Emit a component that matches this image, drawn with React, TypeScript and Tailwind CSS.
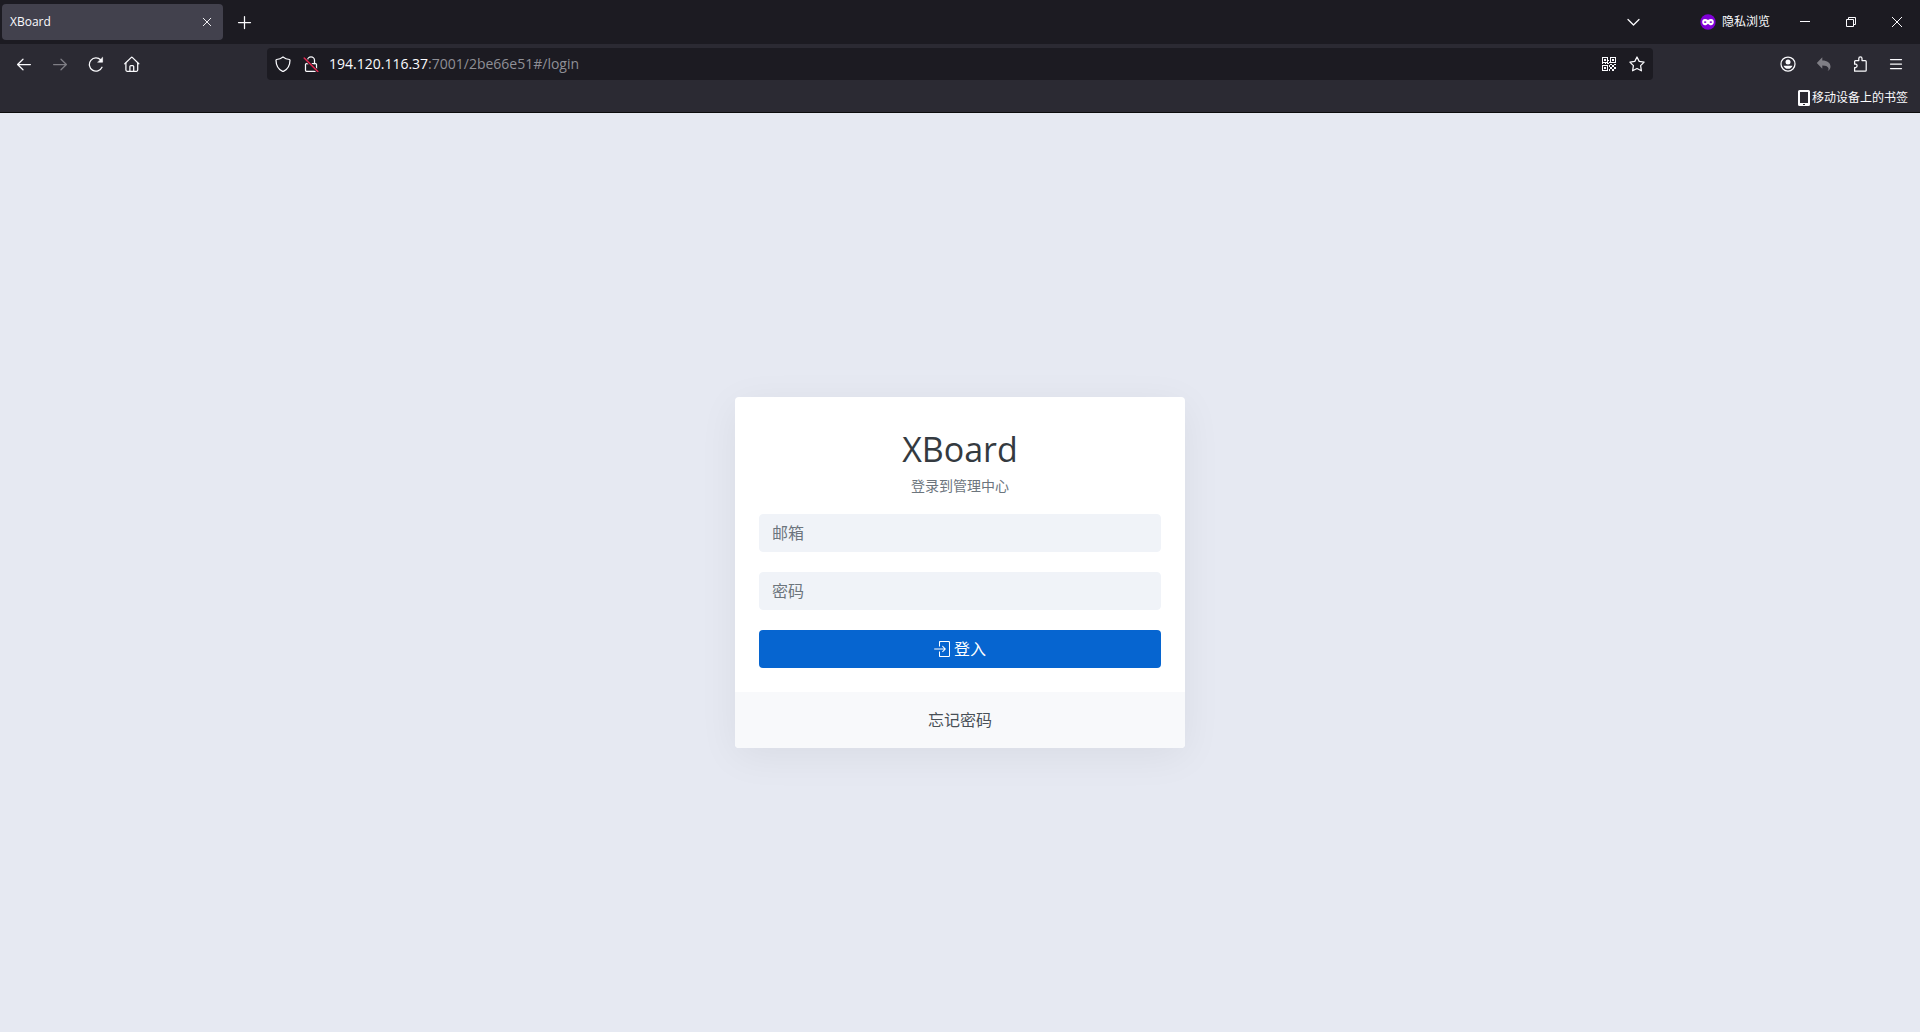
import { useState } from 'react';
import type { ReactNode } from 'react';
import { SlLogin } from 'react-icons/sl';

const Icon = ({ children, className = 'h-4 w-4' }: { children: ReactNode; className?: string }) => (
  <svg
    viewBox="0 0 16 16"
    className={className}
    fill="none"
    stroke="currentColor"
    strokeWidth="1.25"
    strokeLinecap="round"
    strokeLinejoin="round"
    aria-hidden="true"
  >
    {children}
  </svg>
);

const BackIcon = () => (
  <Icon>
    <path d="M14.4 8.5H1.8M7 3.2 1.6 8.5 7 13.8" />
  </Icon>
);

const ForwardIcon = () => (
  <Icon>
    <path d="M1.6 8.5h12.6M9 3.2l5.4 5.3L9 13.8" />
  </Icon>
);

const ReloadIcon = () => (
  <Icon>
    <path d="M14 11.2A6.6 6.6 0 1 1 12.8 4" />
    <path d="M14.6 1.6v4.6H10z" fill="currentColor" strokeWidth="0.6" />
  </Icon>
);

const HomeIcon = () => (
  <Icon>
    <path d="M.8 7.8 7.1 1.6a1 1 0 0 1 1.4 0l6.3 6.2" />
    <path d="M1.9 7v7.1c0 .7.5 1.2 1.2 1.2h9.4c.7 0 1.2-.5 1.2-1.2V7" />
    <path d="M5.9 15v-4.4c0-.6.4-1 1-1h1.8c.6 0 1 .4 1 1V15" />
  </Icon>
);

const ShieldIcon = () => (
  <Icon>
    <path d="M8 .9c1.9 1.5 4 2.3 6.4 2.6.4.1.6.3.6.7-.1 5.3-2.3 9.2-6.6 11.2a1 1 0 0 1-.8 0C3.3 13.4 1.1 9.5 1 4.2c0-.4.2-.6.6-.7C4 3.2 6.1 2.4 8 .9z" />
  </Icon>
);

const InsecureIcon = () => (
  <Icon>
    <path d="M4.5 7.5V4.3a3.5 3.5 0 0 1 7 0v3.2" />
    <rect x="2.5" y="7.5" width="11" height="7.8" rx="1" />
    <path d="M1.4 2.2 14.6 15.4" stroke="#1c1b22" strokeWidth="3" />
    <path d="M1.2 2 14.8 15.5" stroke="#e22850" strokeWidth="1.5" />
  </Icon>
);

const QrIcon = () => (
  <svg viewBox="0 0 14 14" className="h-3.5 w-3.5" fill="currentColor" shapeRendering="crispEdges" aria-hidden="true">
    <path
      fillRule="evenodd"
      d="M0 0h6v6H0zM1 1v4h4V1zM8 0h6v6H8zM9 1v4h4V1zM0 8h6v6H0zM1 9v4h4V9zM2 2h2v2H2zM10 2h2v2h-2zM2 10h2v2H2z"
    />
    <path d="M6 3h1v1H6zM7 5h1v1H7zM0 6h1v1H0zM3 6h1v1H3zM5 6h2v1H5zM8 7h2v1H8zM12 7h2v1h-2zM7 8h1v2H7zM10 8h2v2h-2zM8 10h2v2H8zM12 10h2v2h-2zM7 12h1v2H7zM10 12h2v2h-2z" />
  </svg>
);

const StarIcon = () => (
  <Icon>
    <path d="m8 1 2.2 4.4 4.9.7-3.5 3.5.8 5.2L8 12.5l-4.4 2.3.8-5.2L.9 6.1l4.9-.7z" />
  </Icon>
);

const AccountIcon = () => (
  <Icon>
    <circle cx="8" cy="8" r="7" />
    <circle cx="8" cy="6" r="2.5" fill="currentColor" stroke="none" />
    <path d="M3.5 9.7h9a4.8 4.8 0 0 1-9 0z" fill="currentColor" stroke="none" />
  </Icon>
);

const UndoIcon = () => (
  <Icon>
    <path
      d="M6.3 1.2v3.3c5 0 8.2 2.5 8.2 6 0 2.2-1.1 3.8-3 4.5 1-1 1.3-2 .9-3.1-.7-1.7-2.8-2.5-6.1-2.5v3.3L.8 6.9z"
      fill="currentColor"
      stroke="none"
    />
  </Icon>
);

const PuzzleIcon = () => (
  <Icon>
    <path d="M2.6 8.2V5.5c0-.5.4-.9.9-.9h3.3V2.5a1.6 1.6 0 0 1 3.2 0v2.1h3.3c.5 0 .9.4.9.9v8.8c0 .5-.4.9-.9.9H2.6v-3.7h1.2a1.7 1.7 0 0 0 0-3.3z" />
  </Icon>
);

const MenuIcon = () => (
  <Icon>
    <path d="M2.5 3.5h11M2.5 8h11M2.5 12.5h11" />
  </Icon>
);

const PhoneIcon = () => (
  <svg viewBox="0 0 12 16" className="h-4 w-3" fill="currentColor" aria-hidden="true">
    <path
      fillRule="evenodd"
      d="M1.5 0h9A1.5 1.5 0 0 1 12 1.5v13a1.5 1.5 0 0 1-1.5 1.5h-9A1.5 1.5 0 0 1 0 14.5v-13A1.5 1.5 0 0 1 1.5 0zM2 2v11h8V2zM5 14v1h2v-1z"
    />
  </svg>
);

const PrivateIcon = () => (
  <svg viewBox="0 0 16 16" className="h-4 w-4" aria-hidden="true">
    <circle cx="8" cy="8" r="7.7" fill="#8000d7" />
    <path
      fillRule="evenodd"
      fill="#fff"
      d="M5 5c1.2 0 2.2.4 3 1 .8-.6 1.8-1 3-1 1.8 0 2.8 1.2 2.8 3s-1.2 3.2-2.8 3.2c-1.3 0-2.2-.6-3-1.5-.8.9-1.7 1.5-3 1.5-1.6 0-2.8-1.4-2.8-3.2S3.2 5 5 5zM3.7 8.1c.9 1.3 2 1.3 2.9 0-.9-1.2-2-1.2-2.9 0zM9.4 8.1c.9 1.3 2 1.3 2.9 0-.9-1.2-2-1.2-2.9 0z"
    />
  </svg>
);

const ToolButton = ({ label, disabled, children }: { label: string; disabled?: boolean; children: ReactNode }) => (
  <button
    type="button"
    aria-label={label}
    disabled={disabled}
    className="flex h-8 w-9 items-center justify-center rounded hover:bg-white/10 disabled:text-[#7f7e85]"
  >
    {children}
  </button>
);

const WindowButton = ({ label, children }: { label: string; children: ReactNode }) => (
  <button type="button" aria-label={label} className="flex h-11 w-[46px] items-center justify-center hover:bg-white/10">
    <svg viewBox="0 0 10 10" className="h-2.5 w-2.5" fill="none" stroke="currentColor" aria-hidden="true">
      {children}
    </svg>
  </button>
);

const TabStrip = () => (
  <div className="flex h-11 items-center bg-[#1c1b22]">
    <div className="ml-0.5 flex h-9 w-[221px] items-center justify-between rounded bg-[#42414d] pr-1 pl-2">
      <span className="text-xs">XBoard</span>
      <button type="button" aria-label="关闭标签页" className="flex h-6 w-6 items-center justify-center rounded hover:bg-white/10">
        <Icon className="h-3 w-3">
          <path d="m3 3 10 10M13 3 3 13" />
        </Icon>
      </button>
    </div>
    <div className="ml-1 flex flex-1">
      <ToolButton label="新建标签页">
        <Icon>
          <path d="M7.5 2.5v12M1.5 8.5h12" />
        </Icon>
      </ToolButton>
    </div>
    <ToolButton label="列出所有标签页">
      <Icon>
        <path d="m2 5.5 5.5 5.5L13 5.5" />
      </Icon>
    </ToolButton>
    <div className="mr-3 ml-12 flex items-center gap-1.5 text-xs">
      <PrivateIcon />
      <span>隐私浏览</span>
    </div>
    <WindowButton label="最小化">
      <path d="M0 4.5h10" />
    </WindowButton>
    <WindowButton label="还原">
      <path d="M.5 2.5h7v7h-7zM2.5 2.5v-2h7v7h-2" />
    </WindowButton>
    <WindowButton label="关闭">
      <path d="m0 0 10 10M10 0 0 10" />
    </WindowButton>
  </div>
);

const NavBar = () => (
  <div className="flex h-10 items-center">
    <div className="flex w-[267px] shrink-0 pl-1.5">
      <ToolButton label="后退">
        <BackIcon />
      </ToolButton>
      <ToolButton label="前进" disabled>
        <ForwardIcon />
      </ToolButton>
      <ToolButton label="刷新">
        <ReloadIcon />
      </ToolButton>
      <ToolButton label="主页">
        <HomeIcon />
      </ToolButton>
    </div>
    <div className="flex h-8 min-w-0 flex-1 items-center rounded bg-[#1c1b22] px-0.5">
      <button type="button" aria-label="跟踪保护" className="flex h-7 w-7 items-center justify-center">
        <ShieldIcon />
      </button>
      <button type="button" aria-label="连接不安全" className="flex h-7 w-7 items-center justify-center">
        <InsecureIcon />
      </button>
      <div role="textbox" aria-label="地址栏" className="ml-1 min-w-0 flex-1 truncate text-sm text-[#8f8f96]">
        <span className="text-[#fbfbfe]">194.120.116.37</span>:7001/2be66e51#/login
      </div>
      <button type="button" aria-label="二维码" className="flex h-7 w-7 items-center justify-center">
        <QrIcon />
      </button>
      <button type="button" aria-label="添加书签" className="flex h-7 w-7 items-center justify-center">
        <StarIcon />
      </button>
    </div>
    <div className="flex w-[267px] shrink-0 justify-end pr-1.5">
      <ToolButton label="账户">
        <AccountIcon />
      </ToolButton>
      <ToolButton label="撤销" disabled>
        <UndoIcon />
      </ToolButton>
      <ToolButton label="扩展">
        <PuzzleIcon />
      </ToolButton>
      <ToolButton label="菜单">
        <MenuIcon />
      </ToolButton>
    </div>
  </div>
);

const inputClass =
  'block h-[38px] w-full rounded border border-[#f0f3f8] bg-[#f0f3f8] px-3 text-base text-[#495057] placeholder:text-[#6c757d] placeholder:opacity-100 outline-none';

const LoginCard = () => {
  const [email, setEmail] = useState('');
  const [password, setPassword] = useState('');

  return (
    <div className="w-full max-w-[450px] overflow-hidden rounded bg-white shadow-[0_8px_40px_rgba(20,15,0,0.06)]">
      <form className="flex flex-col gap-5 p-6" onSubmit={e => e.preventDefault()}>
        <div className="pt-1.5 text-center">
          <h1 className="text-[34px] leading-[44px] text-[#343a40]">XBoard</h1>
          <p className="mt-[7px] text-sm leading-4 text-[#6c757d]">登录到管理中心</p>
        </div>
        <input
          type="email"
          aria-label="邮箱"
          placeholder="邮箱"
          value={email}
          onChange={e => setEmail(e.target.value)}
          className={inputClass}
        />
        <input
          type="password"
          aria-label="密码"
          placeholder="密码"
          value={password}
          onChange={e => setPassword(e.target.value)}
          className={inputClass}
        />
        <button
          type="submit"
          className="flex h-[38px] items-center justify-center gap-1 rounded bg-[#0665d0] text-white hover:bg-[#0559b7]"
        >
          <SlLogin className="h-4 w-4" />
          登入
        </button>
      </form>
      <div className="flex h-14 items-center justify-center bg-[#f8f9fb]">
        <a href="#/forget" className="text-[#495057]">
          忘记密码
        </a>
      </div>
    </div>
  );
};

export default function App() {
  return (
    <div className="flex min-h-screen flex-col font-['Open_Sans','Noto_Sans_CJK_SC',sans-serif]">
      <header className="border-b border-[#0c0c0d] bg-[#2b2a33] text-[#fbfbfe]">
        <TabStrip />
        <NavBar />
        <div className="flex h-7 items-center justify-end pr-3">
          <button type="button" className="flex items-center gap-0.5 text-xs">
            <PhoneIcon />
            移动设备上的书签
          </button>
        </div>
      </header>
      <main className="flex flex-1 items-center justify-center bg-[#e6e9f2]">
        <LoginCard />
      </main>
    </div>
  );
}
